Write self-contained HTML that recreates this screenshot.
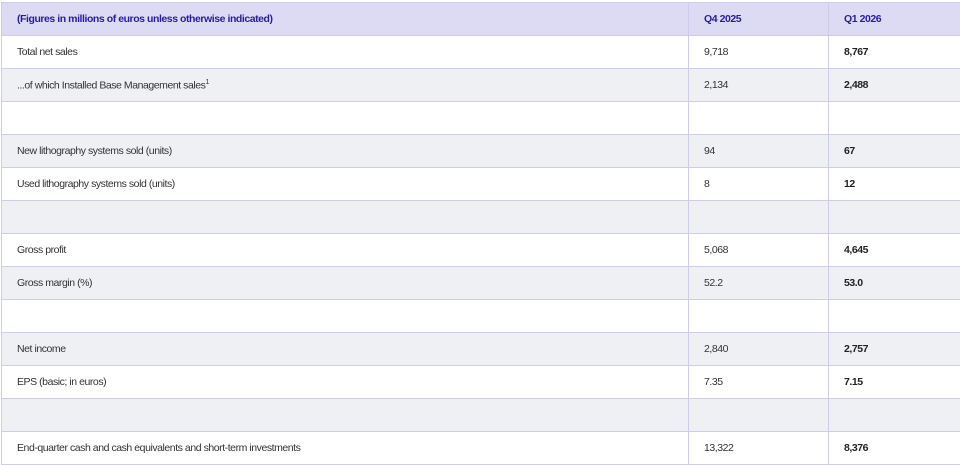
<!DOCTYPE html>
<html><head><style>
body{margin:0;width:960px;height:465px;overflow:hidden;background:#fff;font-family:"Liberation Sans",sans-serif;}
table{position:absolute;left:1px;top:2px;width:970px;border-collapse:collapse;}
td{height:32px;border:1px solid #cfcbea;padding:0 0 0 15px;font-size:10.5px;color:#333;letter-spacing:-0.45px;}
tr:nth-child(odd) td{background:#eff0f4}
tr:nth-child(even) td{background:#fff}
tr.h td{background:#dddbf4;color:#2a1c9e;font-weight:bold}
td.c1{width:124px}td.c2{width:126px}
td b{color:#222}
sup{font-size:7px}
</style></head><body>
<table>
<tr class="h"><td>(Figures in millions of euros unless otherwise indicated)</td><td class="c1">Q4 2025</td><td class="c2">Q1 2026</td></tr>
<tr><td>Total net sales</td><td>9,718</td><td><b>8,767</b></td></tr>
<tr><td>...of which Installed Base Management sales<sup>1</sup></td><td>2,134</td><td><b>2,488</b></td></tr>
<tr><td></td><td></td><td></td></tr>
<tr><td>New lithography systems sold (units)</td><td>94</td><td><b>67</b></td></tr>
<tr><td>Used lithography systems sold (units)</td><td>8</td><td><b>12</b></td></tr>
<tr><td></td><td></td><td></td></tr>
<tr><td>Gross profit</td><td>5,068</td><td><b>4,645</b></td></tr>
<tr><td>Gross margin (%)</td><td>52.2</td><td><b>53.0</b></td></tr>
<tr><td></td><td></td><td></td></tr>
<tr><td>Net income</td><td>2,840</td><td><b>2,757</b></td></tr>
<tr><td>EPS (basic; in euros)</td><td>7.35</td><td><b>7.15</b></td></tr>
<tr><td></td><td></td><td></td></tr>
<tr><td>End-quarter cash and cash equivalents and short-term investments</td><td>13,322</td><td><b>8,376</b></td></tr>
</table>
</body></html>
